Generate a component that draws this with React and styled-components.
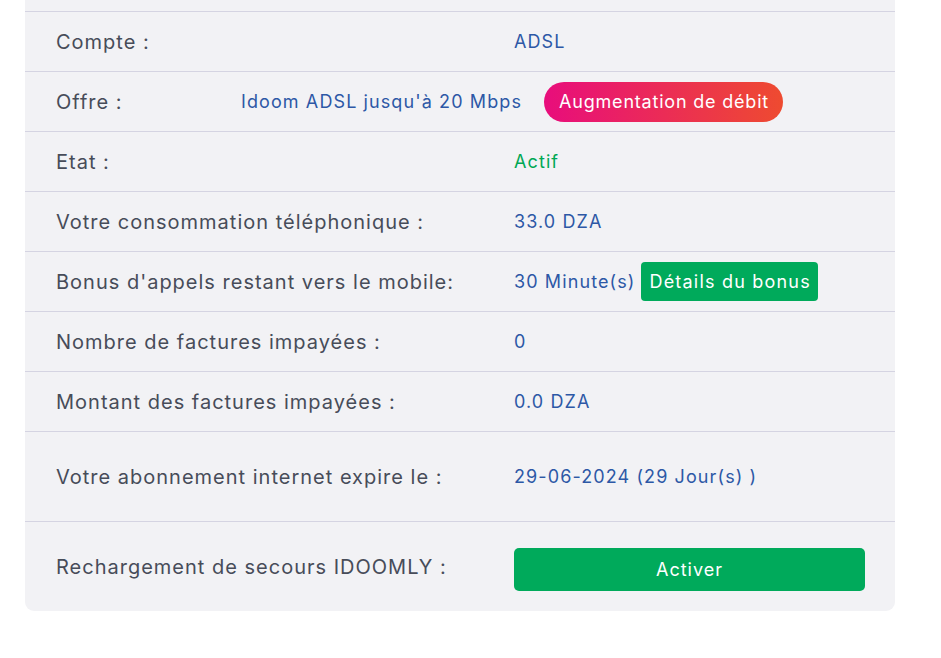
import React from "react";
import styled, { createGlobalStyle } from "styled-components";

const GlobalStyle = createGlobalStyle`
  html, body {
    margin: 0;
    padding: 0;
    background: #ffffff;
    font-family: "Inter", "Noto Sans", sans-serif;
  }
`;

const Page = styled.div`
  padding: 0 46px 0 25px;
`;

const Card = styled.div`
  background: #f2f2f5;
  border-radius: 0 0 9px 9px;
  padding-top: 11px;
  width: 870px;
`;

const Row = styled.div`
  display: flex;
  align-items: center;
  height: ${(p) => (p.$tall ? "89px" : "59px")};
  border-top: 1px solid #d5d4e2;
  padding: 0 30px 0 31px;
`;

const Label = styled.div`
  flex: ${(p) => (p.$narrow ? "0 0 185px" : "0 0 458px")};
  font-size: 20px;
  letter-spacing: 1px;
  color: #474c59;
  white-space: nowrap;
`;

const Value = styled.div`
  flex: 1;
  display: flex;
  align-items: center;
  font-size: 18px;
  letter-spacing: 1.1px;
  white-space: nowrap;
  color: ${(p) => (p.$green ? "#00a854" : "#2d58a6")};
`;

const GradientBadge = styled.span`
  display: inline-flex;
  align-items: center;
  height: 40px;
  padding: 0 14px 0 15px;
  margin-left: 22px;
  border-radius: 20px;
  background: linear-gradient(90deg, #e80d7c 0%, #ee4b30 100%);
  color: #ffffff;
  font-size: 18px;
  letter-spacing: 0.8px;
`;

const BonusButton = styled.span`
  display: inline-flex;
  align-items: center;
  height: 39px;
  padding: 0 7px 0 8px;
  margin-left: 6px;
  border-radius: 4px;
  background: #00aa5b;
  color: #ffffff;
  font-size: 18px;
  letter-spacing: 1.2px;
`;

const ActivateButton = styled.button`
  width: 351px;
  height: 43px;
  margin-top: 6px;
  border: none;
  border-radius: 5px;
  background: #00aa5b;
  color: #ffffff;
  font-family: inherit;
  font-size: 18px;
  letter-spacing: 1px;
  cursor: pointer;
`;

export default function App() {
  return (
    <>
      <GlobalStyle />
      <Page>
        <Card>
          <Row>
            <Label>Compte :</Label>
            <Value>ADSL</Value>
          </Row>
          <Row>
            <Label $narrow>Offre :</Label>
            <Value>
              Idoom ADSL jusqu'à 20 Mbps
              <GradientBadge>Augmentation de débit</GradientBadge>
            </Value>
          </Row>
          <Row>
            <Label>Etat :</Label>
            <Value $green>Actif</Value>
          </Row>
          <Row>
            <Label>Votre consommation téléphonique :</Label>
            <Value>33.0 DZA</Value>
          </Row>
          <Row>
            <Label>Bonus d'appels restant vers le mobile:</Label>
            <Value>
              30 Minute(s)
              <BonusButton>Détails du bonus</BonusButton>
            </Value>
          </Row>
          <Row>
            <Label>Nombre de factures impayées :</Label>
            <Value>0</Value>
          </Row>
          <Row>
            <Label>Montant des factures impayées :</Label>
            <Value>0.0 DZA</Value>
          </Row>
          <Row $tall>
            <Label>Votre abonnement internet expire le :</Label>
            <Value>29-06-2024 (29 Jour(s) )</Value>
          </Row>
          <Row $tall>
            <Label>Rechargement de secours IDOOMLY :</Label>
            <Value>
              <ActivateButton>Activer</ActivateButton>
            </Value>
          </Row>
        </Card>
      </Page>
    </>
  );
}
